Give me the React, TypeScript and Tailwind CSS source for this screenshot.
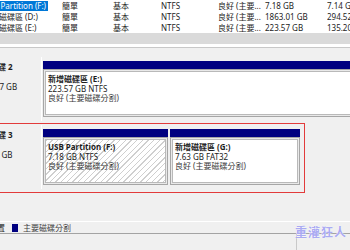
import React from 'react';

// Volume list rows (top pane of Disk Management)
const volumes = [
  { name: 'USB Partition (F:)', size: '7.18 GB', free: '7.14 GB', sel: true },
  { name: '新增磁碟區 (D:)', size: '1863.01 GB', free: '294.52 GB', sel: false },
  { name: '新增磁碟區 (E:)', size: '223.57 GB', free: '135.20 GB', sel: false },
];

type Part = { title: string; info: string; state: string; width?: string; hatched?: boolean };

function Partition({ title, info, state, width, hatched }: Part) {
  return (
    <div className={`flex flex-col shrink-0 ${width ?? 'flex-1'}`}>
      <div className="h-[8px] bg-[#000080]" />
      <div className="h-[48px] border border-[#a6a6a6] bg-[#e9e9e9] p-px">
        <div
          className={`h-full border border-[#b9b9b9] px-[2px] pt-[2px] leading-[9.5px] whitespace-nowrap overflow-hidden ${
            hatched
              ? 'bg-[repeating-linear-gradient(135deg,#cfcfcf_0px,#cfcfcf_1px,#ffffff_1px,#ffffff_4px)]'
              : 'bg-white'
          }`}
        >
          <div className="font-bold">{title}</div>
          <div>{info}</div>
          <div className="text-[#3a3a3a]">{state}</div>
        </div>
      </div>
    </div>
  );
}

function DiskRow({ label, size, children }: { label: string; size: string; children: React.ReactNode }) {
  return (
    <div className="flex h-[64px]">
      {/* disk label, left side is cut off by the screenshot */}
      <div className="w-[42px] shrink-0 overflow-hidden pt-[5px] leading-[10px] whitespace-nowrap border-r border-white">
        <div className="font-bold -ml-[10px]">{label}</div>
        <div className="-ml-[22px]">基本</div>
        <div className="-ml-[21px]">{size}</div>
        <div className="-ml-[22px]">線上</div>
      </div>
      <div className="flex-1 flex gap-[2px] pl-px py-[4px] overflow-hidden">{children}</div>
    </div>
  );
}

export default function App() {
  return (
    <div className="relative w-[350px] h-[250px] overflow-hidden bg-[#f0f0f0] text-[8px] text-[#1c1c1c] font-['Noto_Sans','Noto_Sans_CJK_TC',sans-serif]">
      {/* top list */}
      <div className="bg-white">
        {volumes.map((v) => (
          <div
            key={v.name}
            className="grid grid-cols-[62px_51px_48px_57px_47px_62px_1fr] h-[11px] leading-[11px] whitespace-nowrap"
          >
            <div className="overflow-hidden">
              <span
                className={`inline-block -ml-[17px] ${
                  v.sel ? 'bg-[#0078d7] text-white h-[10px] leading-[10px] pr-[2px]' : ''
                }`}
              >
                {v.name}
              </span>
            </div>
            <div>簡單</div>
            <div>基本</div>
            <div>NTFS</div>
            <div className="overflow-hidden">良好 (主要...</div>
            <div>{v.size}</div>
            <div className="overflow-hidden">{v.free}</div>
          </div>
        ))}
      </div>

      {/* splitter / scrollbar band */}
      <div className="h-[11px] bg-[#dadada]" />
      <div className="h-[3px] bg-white" />
      <div className="h-px bg-[#c8c8c8]" />

      {/* graphical disk view */}
      <div className="h-[9px]" />
      <DiskRow label="磁碟 2" size="223.57 GB">
        <Partition title="新增磁碟區  (E:)" info="223.57 GB NTFS" state="良好 (主要磁碟分割)" width="w-[330px]" />
      </DiskRow>
      <div className="h-[4px]" />
      <div className="relative">
        <DiskRow label="磁碟 3" size="14.81 GB">
          <Partition title="USB Partition  (F:)" info="7.18 GB NTFS" state="良好 (主要磁碟分割)" width="w-[125px]" hatched />
          <Partition title="新增磁碟區  (G:)" info="7.63 GB FAT32" state="良好 (主要磁碟分割)" width="w-[130px]" />
        </DiskRow>
        {/* red annotation box */}
        <div className="absolute -top-[2px] -left-[2px] w-[307px] h-[70px] border border-[#e23b3b]" />
      </div>
      <div className="h-[32px]" />

      {/* legend */}
      <div className="flex items-center h-[13px] border-t border-white border-b border-b-[#a3a3a3] whitespace-nowrap">
        <span className="-ml-[19px]">未配置</span>
        <span className="ml-[7px] w-[6px] h-[8px] bg-[#000080]" />
        <span className="ml-[5px] text-[#404040]">主要磁碟分割</span>
      </div>
      {/* status bar */}
      <div className="flex h-[16px]">
        <div className="w-[297px] border-r border-[#c9c9c9]" />
      </div>

      {/* watermark */}
      <div className="absolute top-[224px] left-[295px] text-[12px] font-bold tracking-[1px] text-[#aaaaf2] whitespace-nowrap [text-shadow:0_0_1px_#fff,0_0_1px_#fff]">
        重灌狂人
      </div>
    </div>
  );
}
